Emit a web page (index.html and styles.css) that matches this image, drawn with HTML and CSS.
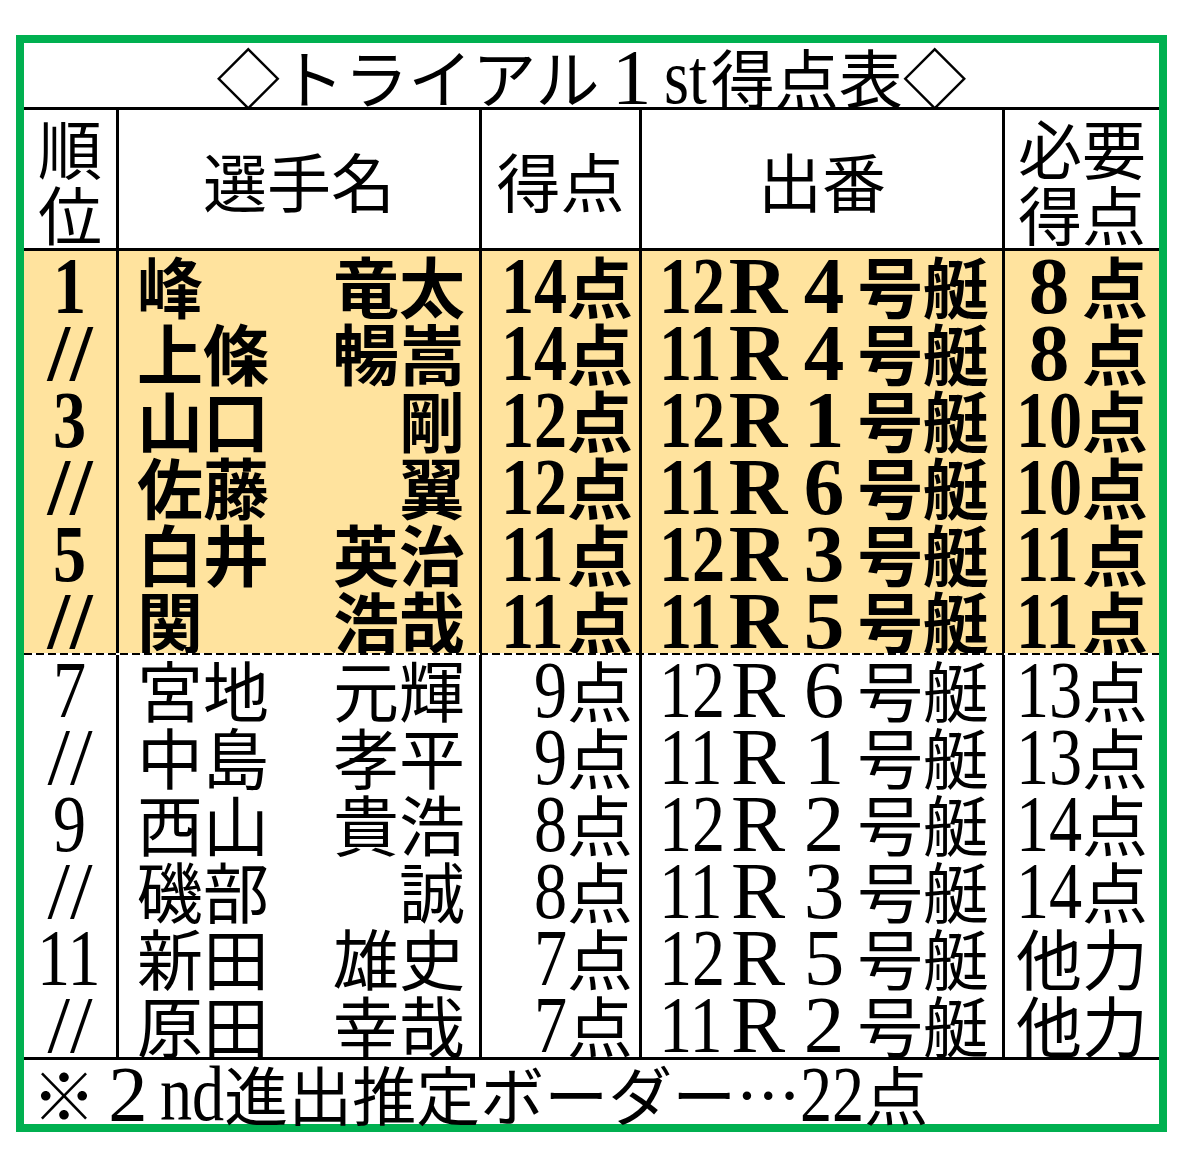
FILE: index.html
```html
<!DOCTYPE html>
<html lang="ja">
<head>
<meta charset="utf-8">
<title>トライアル1st得点表</title>
<link rel="stylesheet" href="styles.css">
</head>
<body>
<div class="frame">
  <div class="title">◇トライアル<span class="fw">1</span><span class="n st">st</span>得点表◇</div>
  <div class="grid head">
    <div><span>順<br>位</span></div>
    <div><span>選手名</span></div>
    <div><span>得点</span></div>
    <div><span>出番</span></div>
    <div><span>必要<br>得点</span></div>
  </div>
  <div class="group hl">
    <div class="grid row">
      <div class="rank"><span class="n n1">1</span></div>
      <div class="name"><span>峰</span><span>竜太</span></div>
      <div class="pts"><span class="n n2">14</span>点</div>
      <div class="race"><span class="n n2">12</span><span class="fw">R</span><span class="fw">4</span>号艇</div>
      <div class="need"><span class="fw">8</span>点</div>
    </div>
    <div class="grid row">
      <div class="rank"><span class="sl">//</span></div>
      <div class="name"><span>上條</span><span>暢嵩</span></div>
      <div class="pts"><span class="n n2">14</span>点</div>
      <div class="race"><span class="n n2">11</span><span class="fw">R</span><span class="fw">4</span>号艇</div>
      <div class="need"><span class="fw">8</span>点</div>
    </div>
    <div class="grid row">
      <div class="rank"><span class="n n1">3</span></div>
      <div class="name"><span>山口</span><span>剛</span></div>
      <div class="pts"><span class="n n2">12</span>点</div>
      <div class="race"><span class="n n2">12</span><span class="fw">R</span><span class="fw">1</span>号艇</div>
      <div class="need"><span class="n n2">10</span>点</div>
    </div>
    <div class="grid row">
      <div class="rank"><span class="sl">//</span></div>
      <div class="name"><span>佐藤</span><span>翼</span></div>
      <div class="pts"><span class="n n2">12</span>点</div>
      <div class="race"><span class="n n2">11</span><span class="fw">R</span><span class="fw">6</span>号艇</div>
      <div class="need"><span class="n n2">10</span>点</div>
    </div>
    <div class="grid row">
      <div class="rank"><span class="n n1">5</span></div>
      <div class="name"><span>白井</span><span>英治</span></div>
      <div class="pts"><span class="n n2">11</span>点</div>
      <div class="race"><span class="n n2">12</span><span class="fw">R</span><span class="fw">3</span>号艇</div>
      <div class="need"><span class="n n2">11</span>点</div>
    </div>
    <div class="grid row">
      <div class="rank"><span class="sl">//</span></div>
      <div class="name"><span>関</span><span>浩哉</span></div>
      <div class="pts"><span class="n n2">11</span>点</div>
      <div class="race"><span class="n n2">11</span><span class="fw">R</span><span class="fw">5</span>号艇</div>
      <div class="need"><span class="n n2">11</span>点</div>
    </div>
  </div>
  <div class="dash"></div>
  <div class="group low">
    <div class="grid row">
      <div class="rank"><span class="n n1">7</span></div>
      <div class="name"><span>宮地</span><span>元輝</span></div>
      <div class="pts"><span class="n n1">9</span>点</div>
      <div class="race"><span class="n n2">12</span><span class="fw">R</span><span class="fw">6</span>号艇</div>
      <div class="need"><span class="n n2">13</span>点</div>
    </div>
    <div class="grid row">
      <div class="rank"><span class="sl">//</span></div>
      <div class="name"><span>中島</span><span>孝平</span></div>
      <div class="pts"><span class="n n1">9</span>点</div>
      <div class="race"><span class="n n2">11</span><span class="fw">R</span><span class="fw">1</span>号艇</div>
      <div class="need"><span class="n n2">13</span>点</div>
    </div>
    <div class="grid row">
      <div class="rank"><span class="n n1">9</span></div>
      <div class="name"><span>西山</span><span>貴浩</span></div>
      <div class="pts"><span class="n n1">8</span>点</div>
      <div class="race"><span class="n n2">12</span><span class="fw">R</span><span class="fw">2</span>号艇</div>
      <div class="need"><span class="n n2">14</span>点</div>
    </div>
    <div class="grid row">
      <div class="rank"><span class="sl">//</span></div>
      <div class="name"><span>磯部</span><span>誠</span></div>
      <div class="pts"><span class="n n1">8</span>点</div>
      <div class="race"><span class="n n2">11</span><span class="fw">R</span><span class="fw">3</span>号艇</div>
      <div class="need"><span class="n n2">14</span>点</div>
    </div>
    <div class="grid row">
      <div class="rank"><span class="n n2">11</span></div>
      <div class="name"><span>新田</span><span>雄史</span></div>
      <div class="pts"><span class="n n1">7</span>点</div>
      <div class="race"><span class="n n2">12</span><span class="fw">R</span><span class="fw">5</span>号艇</div>
      <div class="need">他力</div>
    </div>
    <div class="grid row">
      <div class="rank"><span class="sl">//</span></div>
      <div class="name"><span>原田</span><span>幸哉</span></div>
      <div class="pts"><span class="n n1">7</span>点</div>
      <div class="race"><span class="n n2">11</span><span class="fw">R</span><span class="fw">2</span>号艇</div>
      <div class="need">他力</div>
    </div>
  </div>
  <div class="foot">※<span class="fw">2</span><span class="n n2">nd</span>進出推定ボーダー…<span class="n n2">22</span>点</div>
</div>
</body>
</html>
```

FILE: styles.css
```css
body {
  margin: 0;
  background: #fff;
  color: #000;
  font-family: "Noto Sans CJK JP", sans-serif;
}

.frame {
  box-sizing: border-box;
  width: 1151px;
  height: 1097px;
  margin: 35px 0 0 16px;
  border: 8px solid #00b050;
  display: flex;
  flex-direction: column;
  background: #fff;
}

.title {
  height: 64px;
  flex: none;
  border-bottom: 3px solid #000;
  font-size: 64px;
  line-height: 64px;
  text-align: center;
  white-space: nowrap;
}

.grid {
  display: grid;
  grid-template-columns: 95px 363px 160px 363px 154px;
}

.grid > div {
  box-sizing: border-box;
  border-right: 3px solid #000;
}

.grid > div:last-child {
  border-right: 0;
}

.head {
  height: 138px;
  flex: none;
  border-bottom: 3px solid #000;
}

.head > div {
  display: flex;
  align-items: center;
  justify-content: center;
  font-size: 64px;
  line-height: 66px;
  text-align: center;
}

.group {
  flex: none;
}

.row {
  height: 67px;
  font-size: 66px;
  line-height: 67px;
}

.row > div {
  white-space: nowrap;
}

.hl {
  background: #ffe39e;
  font-weight: 700;
}

.low {
  border-bottom: 3px solid #000;
}

.rank {
  text-align: center;
}

.name {
  display: flex;
  justify-content: space-between;
  padding: 0 14px 0 18px;
}

.pts {
  text-align: right;
  padding-right: 6px;
}

.race {
  text-align: left;
  padding-left: 17px;
}

.need {
  text-align: center;
}

.dash {
  flex: none;
  height: 2px;
  background: repeating-linear-gradient(90deg, #000 0 8px, #fff 8px 12px);
}

.foot {
  flex: 1;
  font-size: 64px;
  line-height: 64px;
  padding-left: 8px;
  white-space: nowrap;
}

.n,
.fw,
.sl {
  display: inline-block;
  font-family: "Liberation Serif", serif;
  font-size: 1.23em;
  line-height: 0.68;
  white-space: nowrap;
}

.n {
  text-align: left;
  transform: scaleX(0.815);
  transform-origin: 0 50%;
}

.n1 {
  width: 0.4075em;
}

.n2 {
  width: 0.815em;
}

.st {
  width: 0.6em;
}

.fw {
  width: 0.813em;
  text-align: center;
}
```
